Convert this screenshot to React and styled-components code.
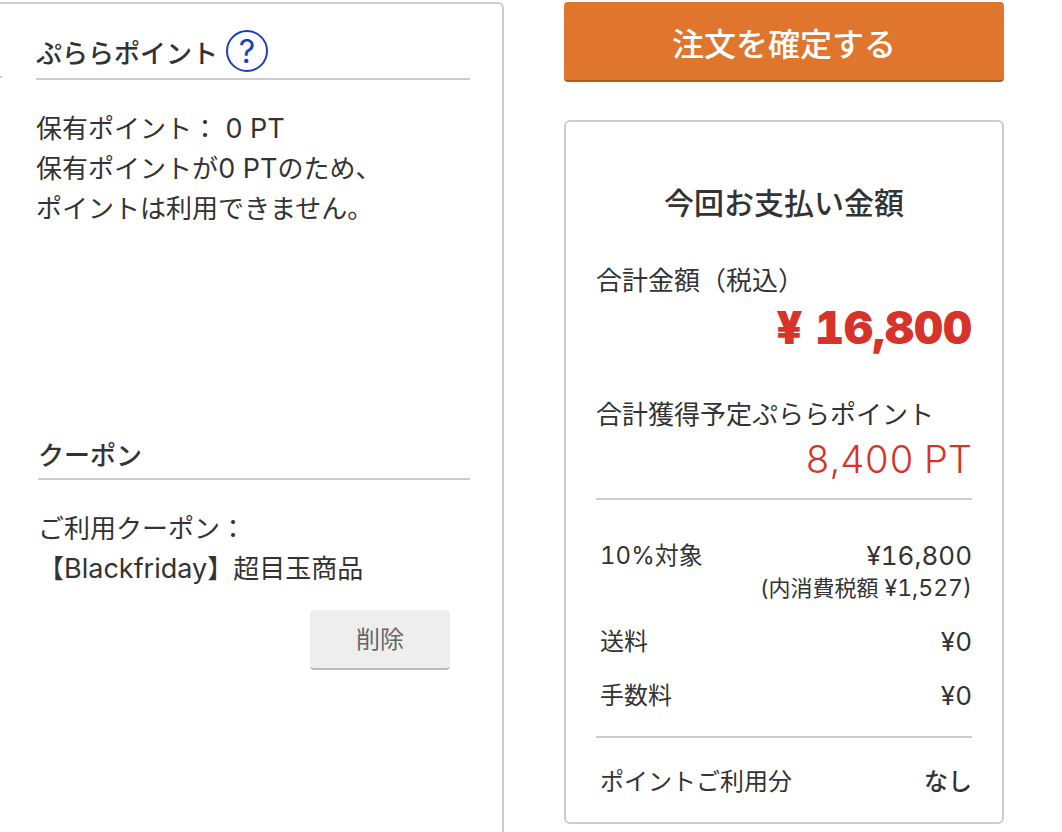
import React from "react";
import styled, { createGlobalStyle } from "styled-components";

const GlobalStyle = createGlobalStyle`
  *, *::before, *::after { box-sizing: border-box; }
  body {
    margin: 0;
    background: #fff;
    color: #333;
    font-family: Inter, "Noto Sans CJK JP", sans-serif;
    font-size: 26px;
    font-variant-numeric: tabular-nums;
    line-height: 40px;
  }
  h2, p, dl, dd { margin: 0; }
  button { font-family: inherit; cursor: pointer; }
`;

const Page = styled.main`
  display: grid;
  grid-template-columns: minmax(0, 504fr) minmax(0, 440fr);
  gap: 60px;
  min-height: 100vh;
  padding: 2px 58px 0 0;
`;

const OptionsPanel = styled.section`
  display: flex;
  gap: 34px;
  padding-right: 32px;
  border: 2px solid #ccc;
  border-width: 2px 2px 0 0;
  border-top-right-radius: 6px;
`;

const PreviousColumn = styled.div`
  flex: none;
  width: 2px;
  height: 74px;
  border-bottom: 2px solid #ccc;
`;

const OptionsColumn = styled.div`
  flex: 1;
  min-width: 0;
`;

const PointsSection = styled.section`
  min-height: 428px;
`;

const CouponSection = styled.section`
  display: flex;
  flex-direction: column;
  padding-left: 2px;
`;

const SectionHeading = styled.h2`
  display: flex;
  align-items: baseline;
  gap: 8px;
  height: ${(p) => (p.$tall ? 76 : 48)}px;
  padding-top: ${(p) => (p.$tall ? 26 : 4)}px;
  border-bottom: 2px solid #ccc;
  font-size: 26px;
  font-weight: 500;
`;

const HelpLink = styled.a`
  width: 42px;
  height: 42px;
  border: 2px solid #1f3fb5;
  border-radius: 50%;
  color: #1f3fb5;
  font-size: 32px;
  font-weight: 400;
  line-height: 40px;
  text-align: center;
  text-decoration: none;
`;

const SectionBody = styled.p`
  margin-top: 29px;
`;

/* Latin runs are set a little larger than the kanji around them. */
const Latin = styled.span`
  font-size: ${(p) => p.$size}px;
  line-height: 1;
`;

const DeleteButton = styled.button`
  align-self: flex-end;
  width: 140px;
  height: 60px;
  margin: 21px 20px 0 0;
  padding: 0 0 4px;
  border: 0;
  border-bottom: 2px solid #bbb;
  border-radius: 4px;
  background: #eee;
  color: #666;
  font-size: 24px;
`;

const Sidebar = styled.aside`
  display: flex;
  flex-direction: column;
  gap: 38px;
`;

const ConfirmButton = styled.button`
  height: 80px;
  padding: 2px 0 0;
  border: 0;
  border-bottom: 2px solid #b05a20;
  border-radius: 4px;
  background: #e0752d;
  color: #fff;
  font-size: 32px;
  font-weight: 500;
`;

const SummaryCard = styled.section`
  padding: 61px 30px 24px;
  border: 2px solid #ccc;
  border-radius: 6px;
`;

const SummaryTitle = styled.h2`
  margin-bottom: 38px;
  font-size: 30px;
  font-weight: 500;
  text-align: center;
`;

const Total = styled.dl`
  margin-bottom: ${(p) => p.$gap}px;
`;

const TotalValue = styled.dd`
  color: #d6342b;
  font-size: ${(p) => (p.$strong ? 45 : 38)}px;
  font-weight: ${(p) => (p.$strong ? 900 : 300)};
  line-height: ${(p) => (p.$strong ? 54 : 48)}px;
  text-align: right;
`;

const Breakdown = styled.dl`
  display: flex;
  flex-direction: column;
  gap: 22px;
  padding: ${(p) => p.$padding};
  border-top: 2px solid #ccc;
  font-size: 24px;
  line-height: 32px;
`;

const BreakdownRow = styled.div`
  display: flex;
  justify-content: space-between;
  padding-left: 4px;
`;

const Amount = styled.dd`
  font-size: ${(p) => (p.$text ? 24 : 26)}px;
  font-weight: ${(p) => (p.$text ? 500 : 400)};
  text-align: right;
`;

const TaxNote = styled.div`
  font-size: 22px;
`;

export default function App() {
  return (
    <>
      <GlobalStyle />
      <Page lang="ja">
        <OptionsPanel>
          <PreviousColumn />
          <OptionsColumn>
            <PointsSection>
              <SectionHeading $tall>
                ぷららポイント
                <HelpLink href="#help">?</HelpLink>
              </SectionHeading>
              <SectionBody>
                保有ポイント：<Latin $size={27}> 0 PT</Latin>
                <br />
                保有ポイントが<Latin $size={27}>0 PT</Latin>のため、
                <br />
                ポイントは利用できません。
              </SectionBody>
            </PointsSection>
            <CouponSection>
              <SectionHeading>クーポン</SectionHeading>
              <SectionBody>
                ご利用クーポン：
                <br />
                【<Latin $size={27}>Blackfriday</Latin>】超目玉商品
              </SectionBody>
              <DeleteButton type="button">削除</DeleteButton>
            </CouponSection>
          </OptionsColumn>
        </OptionsPanel>
        <Sidebar>
          <ConfirmButton type="button">注文を確定する</ConfirmButton>
          <SummaryCard>
            <SummaryTitle>今回お支払い金額</SummaryTitle>
            <Total $gap={40}>
              <dt>合計金額（税込）</dt>
              <TotalValue $strong>¥ 16,800</TotalValue>
            </Total>
            <Total $gap={15}>
              <dt>合計獲得予定ぷららポイント</dt>
              <TotalValue>8,400 PT</TotalValue>
            </Total>
            <Breakdown $padding="40px 0 24px">
              <BreakdownRow>
                <dt>10%対象</dt>
                <Amount>
                  ¥16,800
                  <TaxNote>
                    (内消費税額 <Latin $size={23}>¥1,527)</Latin>
                  </TaxNote>
                </Amount>
              </BreakdownRow>
              <BreakdownRow>
                <dt>送料</dt>
                <Amount>¥0</Amount>
              </BreakdownRow>
              <BreakdownRow>
                <dt>手数料</dt>
                <Amount>¥0</Amount>
              </BreakdownRow>
            </Breakdown>
            <Breakdown $padding="28px 0 0">
              <BreakdownRow>
                <dt>ポイントご利用分</dt>
                <Amount $text>なし</Amount>
              </BreakdownRow>
            </Breakdown>
          </SummaryCard>
        </Sidebar>
      </Page>
    </>
  );
}
